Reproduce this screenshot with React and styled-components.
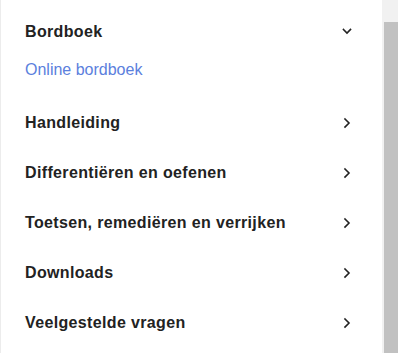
import React from 'react'
import styled, { createGlobalStyle } from 'styled-components'

const GlobalStyle = createGlobalStyle`
  html, body {
    margin: 0;
    padding: 0;
    background: #ffffff;
  }
  body {
    font-family: 'Liberation Sans', Arial, sans-serif;
  }
`

const Frame = styled.div`
  display: flex;
  width: 398px;
  height: 353px;
  overflow: hidden;
`
const Panel = styled.nav`
  flex: 1;
  border-left: 1px solid #ececec;
  padding: 7px 27px 0 24px;
  display: flex;
  flex-direction: column;
`
const Row = styled.div`
  display: flex;
  align-items: center;
  justify-content: space-between;
  height: 50px;
  font-size: 16px;
  font-weight: 700;
  letter-spacing: 0.35px;
  color: #222222;
  cursor: pointer;
`
const SubList = styled.div`
  display: flex;
  flex-direction: column;
  padding: 1px 0 16px;
`
const SubLink = styled.a`
  font-size: 16px;
  line-height: 24px;
  color: #5b80dd;
  text-decoration: none;
`
const Icon = styled.svg`
  width: 16px;
  height: 16px;
  flex: none;
  color: #222222;
`
const Track = styled.div`
  width: 14px;
  background: #f1f1f1;
  padding: 22px 0 0 2px;
  display: flex;
`
const Thumb = styled.div`
  flex: 1;
  background: #c1c1c1;
`

const Chevron = ({ open }) => (
  <Icon viewBox="0 0 16 16" fill="none" stroke="currentColor" strokeWidth={1.6} strokeLinecap="square">
    <path d={open ? 'M4.5 5.5 L8 9 L11.5 5.5' : 'M6 4 L10 8 L6 12'} />
  </Icon>
)

const items = [
  'Handleiding',
  'Differentiëren en oefenen',
  'Toetsen, remediëren en verrijken',
  'Downloads',
  'Veelgestelde vragen',
]

export default function App() {
  return (
    <>
      <GlobalStyle />
      <Frame>
        <Panel>
          <Row>
            <span>Bordboek</span>
            <Chevron open />
          </Row>
          <SubList>
            <SubLink href="#">Online bordboek</SubLink>
          </SubList>
          {items.map((item) => (
            <Row key={item}>
              <span>{item}</span>
              <Chevron />
            </Row>
          ))}
        </Panel>
        <Track>
          <Thumb />
        </Track>
      </Frame>
    </>
  )
}
